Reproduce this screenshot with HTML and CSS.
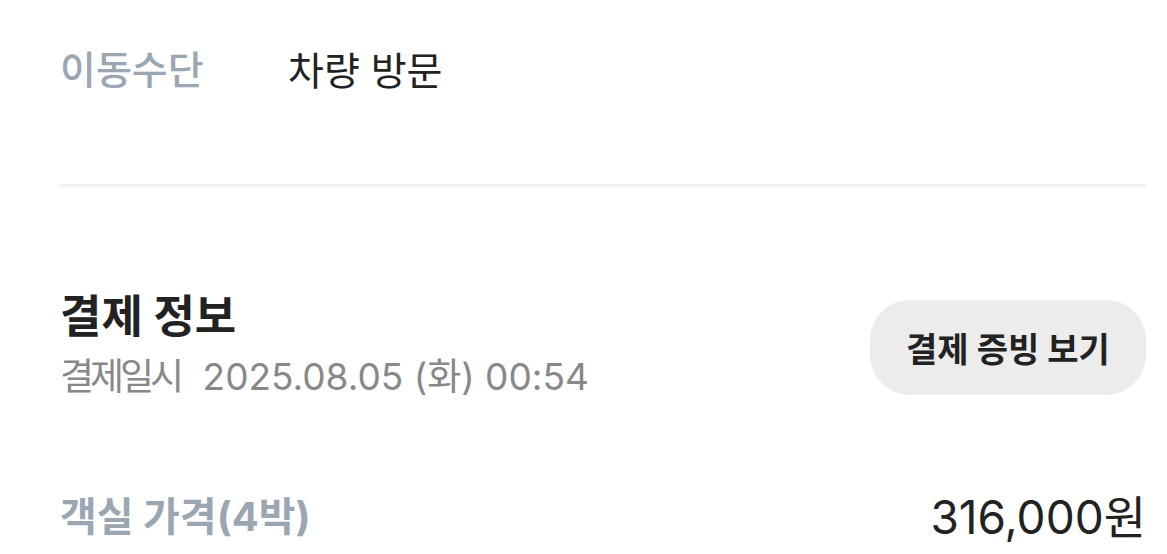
FILE: index.html
```html
<!DOCTYPE html>
<html lang="ko">
<head>
    <meta charset="UTF-8">
    <meta name="viewport" content="width=device-width, initial-scale=1.0">
    <title>예약 상세</title>
    <link rel="stylesheet" href="styles.css">
</head>
<body>
    <div class="container">
        <div class="info-row">
            <span class="info-label">이동수단</span>
            <span class="info-value">차량 방문</span>
        </div>

        <hr class="divider">

        <div class="payment-head">
            <div class="payment-title">
                <h2>결제 정보</h2>
                <p class="paid-at"><span class="paid-label">결제일시</span> 2025.08.05 (화) 00:54</p>
            </div>
            <button type="button" class="receipt-btn">결제 증빙 보기</button>
        </div>

        <div class="price-row">
            <span class="price-label">객실 가격(4박)</span>
            <span class="price-value">316,000원</span>
        </div>
    </div>
</body>
</html>
```

FILE: styles.css
```css
body {
    font-family: Inter, "Noto Sans CJK KR", sans-serif;
    background-color: #fff;
    color: #222;
    margin: 0;
    padding: 0;
    overflow: hidden;
}
.container {
    padding: 0 21px 0 60px;
}
.info-row {
    display: flex;
    align-items: center;
    height: 136px;
    font-size: 39px;
}
.info-label {
    width: 228px;
    color: #9ba6b3;
    font-weight: 500;
    margin-bottom: 2px;
}
.info-value {
    color: #222;
}
.divider {
    border: none;
    height: 3px;
    background-color: #f2f2f2;
    margin: 48px 0 0;
}
.payment-head {
    display: flex;
    justify-content: space-between;
    align-items: center;
    margin-top: 100px;
}
.payment-title h2 {
    margin: 0;
    font-size: 45px;
    font-weight: 700;
    line-height: 60px;
}
.paid-at {
    margin: 0;
    font-size: 37px;
    color: #888;
    line-height: 60px;
}
.paid-label {
    letter-spacing: -4px;
    margin-right: 12px;
}
.receipt-btn {
    font-family: inherit;
    background-color: #ececec;
    color: #222;
    border: none;
    border-radius: 40px;
    width: 276px;
    height: 95px;
    font-size: 34px;
    font-weight: 700;
    cursor: pointer;
}
.price-row {
    display: flex;
    justify-content: space-between;
    align-items: center;
    margin-top: 74px;
}
.price-label {
    font-size: 40px;
    font-weight: 700;
    color: #9ba6b3;
}
.price-value {
    font-size: 46px;
    color: #222;
}
```
